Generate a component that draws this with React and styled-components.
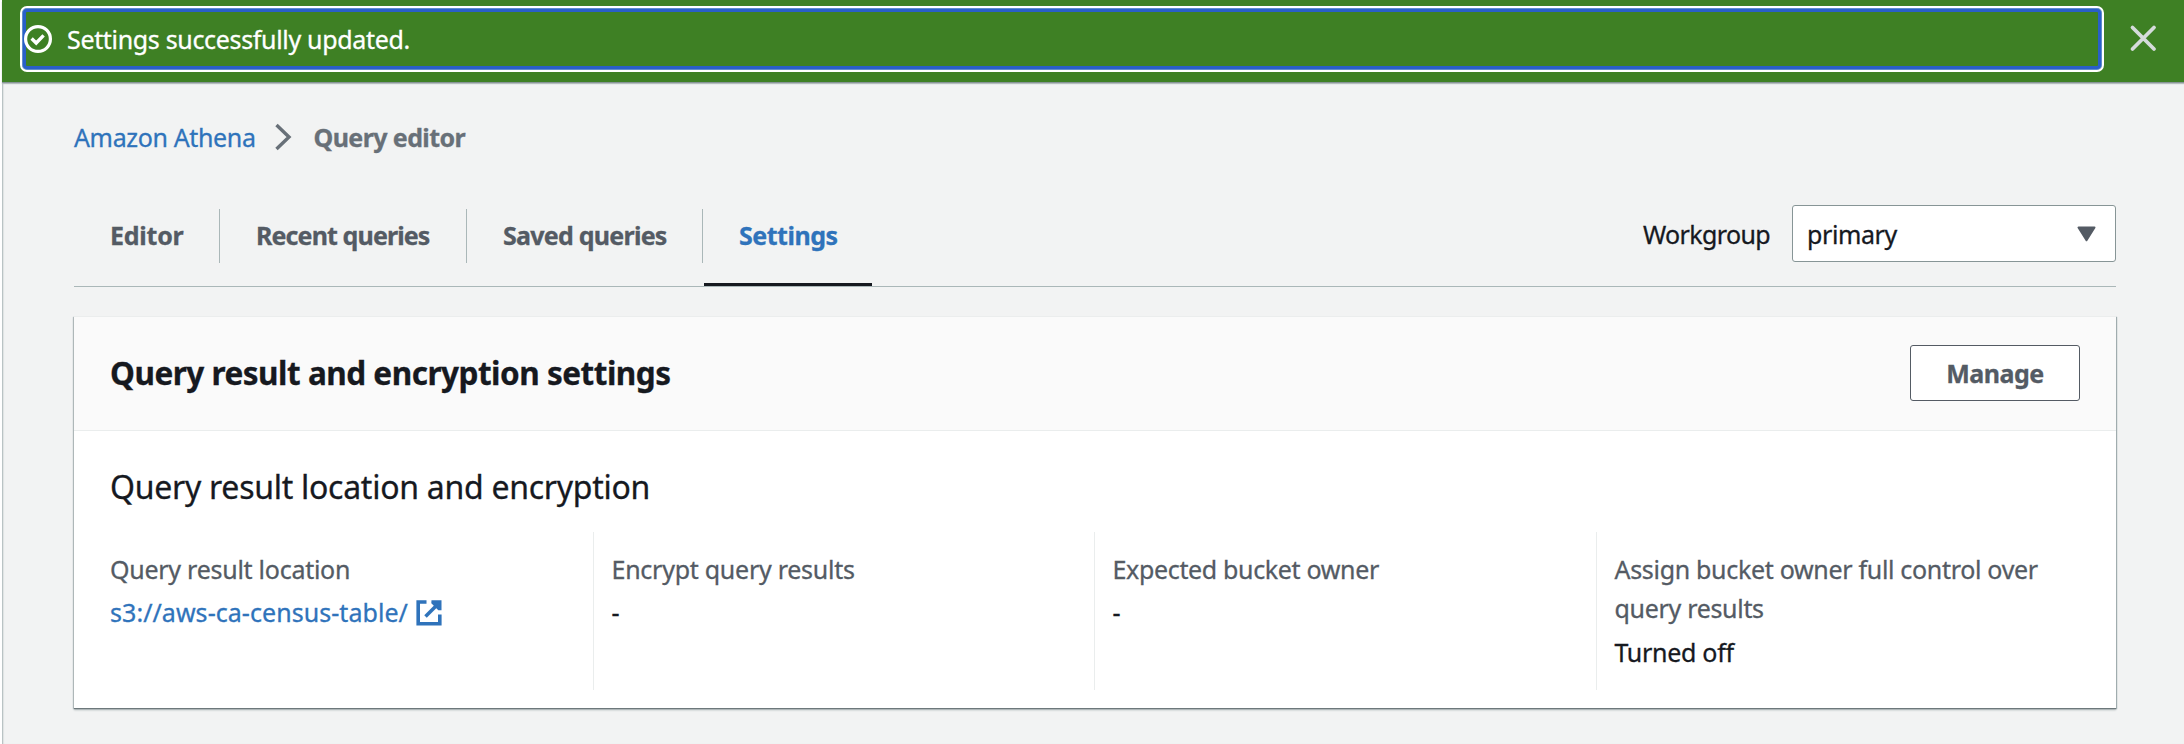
import React from "react";
import styled, { createGlobalStyle } from "styled-components";

const GlobalStyle = createGlobalStyle`
  * { box-sizing: border-box; }
  body {
    margin: 0;
    background: #f2f3f3;
    color: #16191f;
    font: 400 25px/36px "Noto Sans", sans-serif;
    -webkit-text-stroke: 0.3px currentColor;
  }
`;

const Page = styled.div`
  display: flex;
  width: 2184px;
  height: 744px;
  overflow: hidden;
`;

const NavEdge = styled.div`
  width: 2px;
  background: #fff;
`;

const Main = styled.main`
  flex: 1;
  min-width: 0;
  box-shadow: inset 1px 0 0 #b9c3c4, inset 2px 0 1px #dfe3e3;
`;

const Text = styled.span`
  letter-spacing: ${(p) => p.$spacing || 0}px;
  white-space: nowrap;
`;

const Flash = styled.div`
  display: flex;
  align-items: flex-start;
  height: 82px;
  padding: 6px 0 0 18px;
  background: #3e8024;
  color: #fff;
  box-shadow: 0 1px 0 #879596, 0 2px 1px #b4bcbd;
`;

const FlashMessage = styled.div`
  display: flex;
  align-items: center;
  gap: 15px;
  width: 2084px;
  height: 66px;
  padding: 0 0 1px 2px;
  border: 2px solid #fff;
  border-radius: 7px;
  box-shadow: inset 0 0 0 1px #5f8ccb, inset 0 0 0 4px #295fc8;
`;

const CloseButton = styled.button`
  display: flex;
  margin: 18px 0 0 25px;
  padding: 0;
  border: 0;
  background: none;
`;

const Content = styled.div`
  padding: 37px 68px 0 72px;
`;

const Breadcrumbs = styled.nav`
  display: flex;
  align-items: center;
  height: 36px;
`;

const Crumb = styled(Text)`
  color: ${(p) => (p.$current ? "#687078" : "#2f73bb")};
  font-weight: ${(p) => (p.$current ? 700 : 400)};
`;

const Chevron = styled.svg`
  margin: 0 22px 0 19px;
`;

const Toolbar = styled.div`
  display: flex;
  justify-content: space-between;
  height: 82px;
  margin-top: 50px;
  border-bottom: 1px solid #aab7b8;
`;

const Tabs = styled.div`
  display: flex;
`;

const Tab = styled.div`
  display: flex;
  width: ${(p) => p.$width}px;
  margin-left: ${(p) => (p.$active ? 1 : 0)}px;
  padding-top: 4px;
  border-bottom: 3px solid ${(p) => (p.$active ? "#16191f" : "transparent")};
  color: ${(p) => (p.$active ? "#2f73bb" : "#545b64")};
  font-weight: 700;
`;

const TabLabel = styled.div`
  flex: 1;
  height: 54px;
  padding-left: ${(p) => (p.$last ? 35 : 36)}px;
  border-right: 1px solid ${(p) => (p.$last ? "transparent" : "#aab7b8")};
  line-height: 53px;
`;

const Workgroup = styled.div`
  display: flex;
  align-items: center;
  gap: 22px;
  height: 57px;
`;

const Select = styled.div`
  display: flex;
  align-items: center;
  justify-content: space-between;
  width: 324px;
  height: 57px;
  padding: 0 19px 0 14px;
  border: 1px solid #879596;
  border-radius: 3px;
  background: #fff;
`;

const Card = styled.section`
  height: 392px;
  margin-top: 29px;
  background: #fff;
  box-shadow: 0 1px 1px #6d787b, 0 2px 2px #aeb7b8, 1px 1px 1px #aab7b8,
    -1px 1px 1px #c3cbcc;
`;

const CardHeader = styled.header`
  display: flex;
  align-items: center;
  justify-content: space-between;
  height: 115px;
  padding: 0 36px 2px 36px;
  border-top: 1px solid #ebeded;
  border-bottom: 1px solid #eaeded;
  background: #fafafa;
`;

const Title = styled.h2`
  margin: 0;
  font-size: 31.5px;
  font-weight: 700;
  letter-spacing: -0.49px;
`;

const Button = styled.button`
  width: 170px;
  height: 56px;
  padding: 0;
  border: 1px solid #545b64;
  border-radius: 3px;
  background: #fff;
  color: #545b64;
  font: 700 25px/36px "Noto Sans", sans-serif;
`;

const Subtitle = styled.h3`
  margin: 0;
  padding: 35px 36px 24px;
  font-size: 32px;
  font-weight: 400;
  line-height: 42px;
  letter-spacing: -0.27px;
`;

const Columns = styled.div`
  display: grid;
  grid-template-columns: 484px 501px 502px 1fr;
  height: 158px;
  padding-left: 36px;
`;

const Column = styled.div`
  padding: 17.6px 0 0 ${(p) => (p.$first ? 0 : 17.5)}px;
  border-left: ${(p) => (p.$first ? 0 : 1)}px solid #eaeded;
  margin-left: ${(p) => (p.$first ? 0 : -1)}px;
  line-height: 39.4px;
`;

const Label = styled.div`
  margin-bottom: 4.4px;
  color: #545b64;
`;

const Value = styled.div`
  display: flex;
  align-items: center;
  gap: 8px;
  color: ${(p) => (p.$link ? "#2f73bb" : "#16191f")};
`;

const SuccessIcon = () => (
  <svg width="28" height="28" viewBox="0 0 28 28" fill="none" stroke="#fff">
    <circle cx="14" cy="14" r="12.4" strokeWidth="3.2" />
    <path d="M7.6 13.6l4.6 4.4 7.4-7.6" strokeWidth="3.4" />
  </svg>
);

const CloseIcon = () => (
  <svg width="28" height="28" viewBox="0 0 28 28" fill="none" stroke="#d5dbdb">
    <path d="M3.5 3.5l21.5 21.5M25 3.5L3.5 25" strokeWidth="3.8" strokeLinecap="round" />
  </svg>
);

const ExternalIcon = () => (
  <svg width="26" height="26" viewBox="0 0 26 26" fill="none" stroke="#2f73bb">
    <path d="M10.5 2H2.2v21.8h21.6V14.5" strokeWidth="3.6" />
    <path d="M22 4L9.5 16.5" strokeWidth="3.6" />
    <path d="M15.5 .2h10v10h-3.2l-7-7z" fill="#2f73bb" stroke="none" />
  </svg>
);

const tabs = [
  { label: "Editor", width: 146, spacing: -0.25 },
  { label: "Recent queries", width: 247, spacing: -0.88 },
  { label: "Saved queries", width: 236, spacing: -0.75 },
  { label: "Settings", width: 168, spacing: -0.5, active: true },
];

export default function App() {
  return (
    <Page>
      <GlobalStyle />
      <NavEdge />
      <Main>
        <Flash>
          <FlashMessage>
            <SuccessIcon />
            <Text $spacing={-0.33}>Settings successfully updated.</Text>
          </FlashMessage>
          <CloseButton aria-label="Close">
            <CloseIcon />
          </CloseButton>
        </Flash>
        <Content>
          <Breadcrumbs>
            <Crumb $spacing={-0.36}>Amazon Athena</Crumb>
            <Chevron width="17" height="28" viewBox="0 0 17 28" fill="none" stroke="#687078">
              <path d="M1.5 2l12.5 12L1.5 26" strokeWidth="3.4" />
            </Chevron>
            <Crumb $current $spacing={-0.6}>Query editor</Crumb>
          </Breadcrumbs>
          <Toolbar>
            <Tabs>
              {tabs.map((t) => (
                <Tab key={t.label} $width={t.width} $active={t.active}>
                  <TabLabel $last={t.active}>
                    <Text $spacing={t.spacing}>{t.label}</Text>
                  </TabLabel>
                </Tab>
              ))}
            </Tabs>
            <Workgroup>
              <Text $spacing={-0.62}>Workgroup</Text>
              <Select>
                <Text $spacing={-0.4}>primary</Text>
                <svg width="19" height="16" viewBox="0 0 19 16">
                  <path d="M1.5 1.5h16l-8 12.8z" fill="#545b64" stroke="#545b64" strokeWidth="2" strokeLinejoin="round" />
                </svg>
              </Select>
            </Workgroup>
          </Toolbar>
          <Card>
            <CardHeader>
              <Title>Query result and encryption settings</Title>
              <Button>
                <Text $spacing={-0.5}>Manage</Text>
              </Button>
            </CardHeader>
            <Subtitle>Query result location and encryption</Subtitle>
            <Columns>
              <Column $first>
                <Label><Text $spacing={-0.26}>Query result location</Text></Label>
                <Value $link>
                  <Text $spacing={0.05}>s3://aws-ca-census-table/</Text>
                  <ExternalIcon />
                </Value>
              </Column>
              <Column>
                <Label><Text $spacing={-0.26}>Encrypt query results</Text></Label>
                <Value>-</Value>
              </Column>
              <Column>
                <Label><Text $spacing={-0.34}>Expected bucket owner</Text></Label>
                <Value>-</Value>
              </Column>
              <Column>
                <Label>
                  <Text $spacing={-0.31}>
                    Assign bucket owner full control over
                    <br />
                    query results
                  </Text>
                </Label>
                <Value><Text $spacing={-0.29}>Turned off</Text></Value>
              </Column>
            </Columns>
          </Card>
        </Content>
      </Main>
    </Page>
  );
}
